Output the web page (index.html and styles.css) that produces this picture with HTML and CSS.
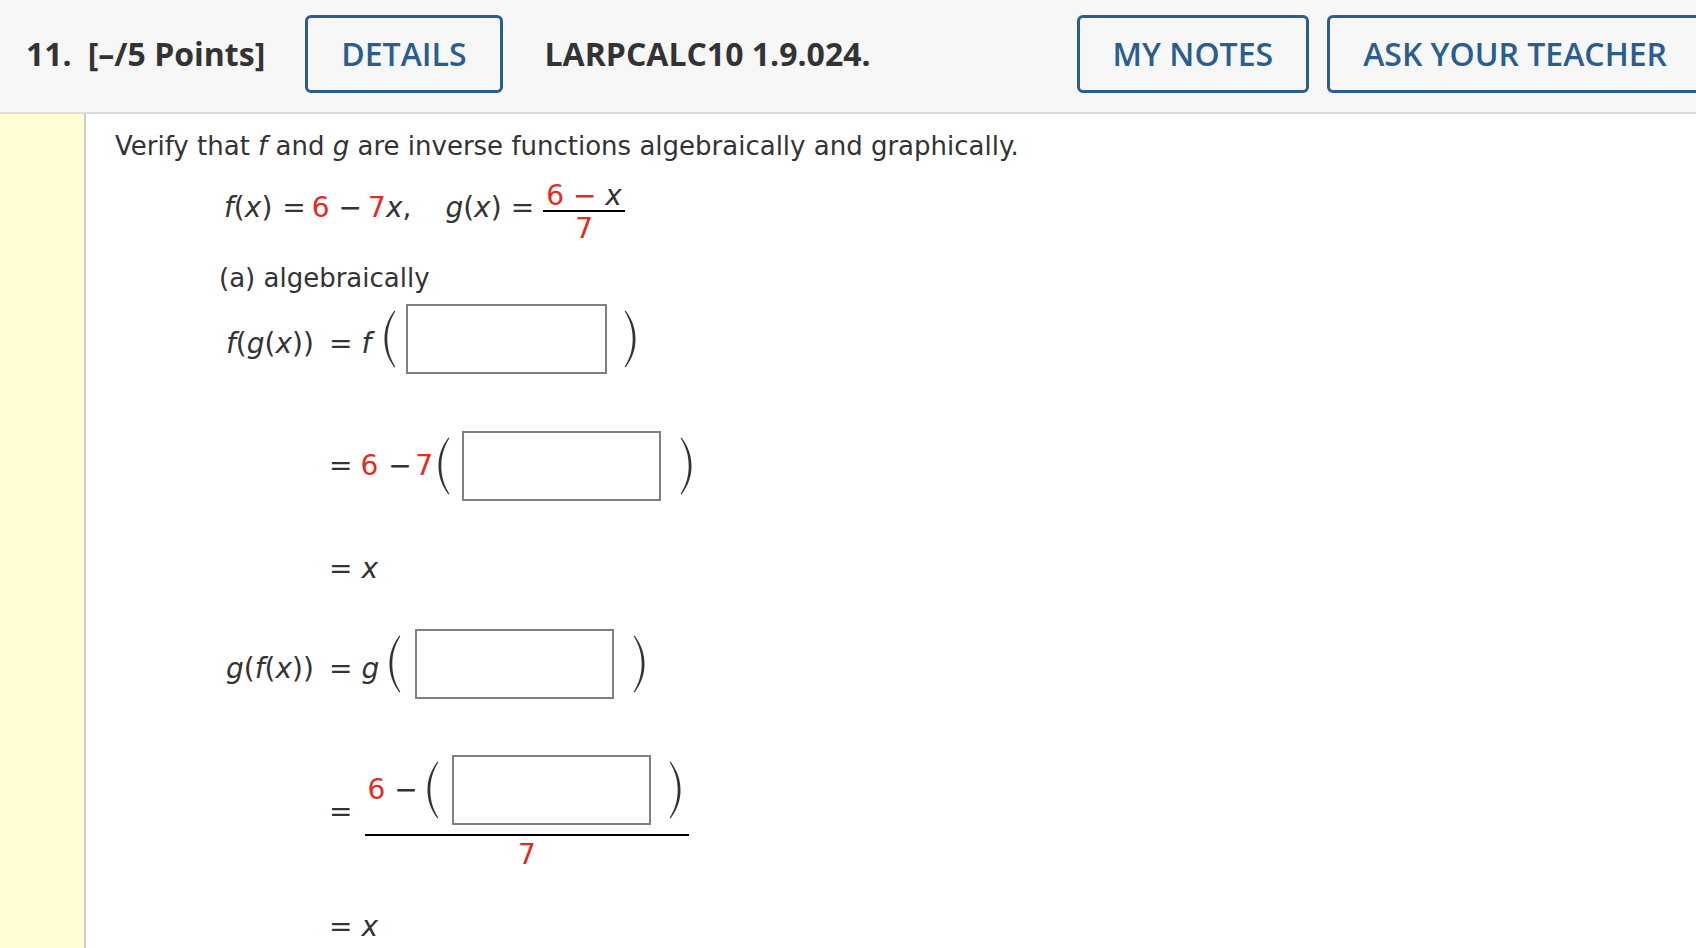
FILE: index.html
```html
<!DOCTYPE html>
<html lang="en">
<head>
<meta charset="utf-8">
<title>LARPCALC10 1.9.024</title>
<link rel="stylesheet" href="styles.css">
</head>
<body>
<header class="qhead">
  <span class="qnum">11.</span>
  <span class="qpts">[–/5 Points]</span>
  <button class="btn btn-details">DETAILS</button>
  <span class="qref">LARPCALC10 1.9.024.</span>
  <button class="btn btn-notes">MY NOTES</button>
  <button class="btn btn-ask">ASK YOUR TEACHER</button>
</header>
<div class="qbody">
  <div class="gutter"></div>
  <div class="main">
    <p class="prompt">Verify that <i>f</i> and <i>g</i> are inverse functions algebraically and graphically.</p>

    <div class="given m">
      <span class="t t-fx"><i>f</i>(<i>x</i>)</span>
      <span class="t t-eq1">=</span>
      <span class="t t-6 r">6</span>
      <span class="t t-minus">−</span>
      <span class="t t-7"><span class="r">7</span><i>x</i>,</span>
      <span class="t t-gx"><i>g</i>(<i>x</i>)</span>
      <span class="t t-eq2">=</span>
      <span class="frac frac-given">
        <span class="num">6 − <i>x</i></span>
        <span class="bar"></span>
        <span class="den r">7</span>
      </span>
    </div>

    <p class="part">(a) algebraically</p>

    <div class="row row1 m">
      <span class="lhs low"><i>f</i>(<i>g</i>(<i>x</i>))</span>
      <span class="eq low">=</span>
      <span class="fn low"><i>f</i></span>
      <svg class="paren pl" viewBox="0 0 13 58" aria-hidden="true"><path d="M11.5 0.5C4.5 10 1.5 19 1.5 29C1.5 39 4.5 48 11.5 57.5L12.3 56.8C6.5 47.5 4.3 38.5 4.3 29C4.3 19.5 6.5 10.5 12.3 1.2Z"/></svg>
      <span class="box"></span>
      <svg class="paren pr" viewBox="0 0 13 58" aria-hidden="true"><path d="M1.5 0.5C8.5 10 11.5 19 11.5 29C11.5 39 8.5 48 1.5 57.5L0.7 56.8C6.5 47.5 8.7 38.5 8.7 29C8.7 19.5 6.5 10.5 0.7 1.2Z"/></svg>
    </div>

    <div class="row row2 m">
      <span class="lhs"></span>
      <span class="eq">=</span>
      <span class="r c6">6</span>
      <span class="cminus">−</span>
      <span class="r c7">7</span>
      <svg class="paren pl" viewBox="0 0 13 58" aria-hidden="true"><path d="M11.5 0.5C4.5 10 1.5 19 1.5 29C1.5 39 4.5 48 11.5 57.5L12.3 56.8C6.5 47.5 4.3 38.5 4.3 29C4.3 19.5 6.5 10.5 12.3 1.2Z"/></svg>
      <span class="box"></span>
      <svg class="paren pr" viewBox="0 0 13 58" aria-hidden="true"><path d="M1.5 0.5C8.5 10 11.5 19 11.5 29C11.5 39 8.5 48 1.5 57.5L0.7 56.8C6.5 47.5 8.7 38.5 8.7 29C8.7 19.5 6.5 10.5 0.7 1.2Z"/></svg>
    </div>

    <div class="row row3 m">
      <span class="lhs"></span>
      <span class="eq">=</span>
      <span class="xv"><i>x</i></span>
    </div>

    <div class="row row4 m">
      <span class="lhs low"><i>g</i>(<i>f</i>(<i>x</i>))</span>
      <span class="eq low">=</span>
      <span class="fn low"><i>g</i></span>
      <svg class="paren pl" viewBox="0 0 13 58" aria-hidden="true"><path d="M11.5 0.5C4.5 10 1.5 19 1.5 29C1.5 39 4.5 48 11.5 57.5L12.3 56.8C6.5 47.5 4.3 38.5 4.3 29C4.3 19.5 6.5 10.5 12.3 1.2Z"/></svg>
      <span class="box"></span>
      <svg class="paren pr" viewBox="0 0 13 58" aria-hidden="true"><path d="M1.5 0.5C8.5 10 11.5 19 11.5 29C11.5 39 8.5 48 1.5 57.5L0.7 56.8C6.5 47.5 8.7 38.5 8.7 29C8.7 19.5 6.5 10.5 0.7 1.2Z"/></svg>
    </div>

    <div class="row row5 m">
      <span class="lhs"></span>
      <span class="eq">=</span>
      <span class="frac frac-big">
        <span class="bignum">
          <span class="r n6">6</span>
          <span class="nminus">−</span>
          <svg class="paren pl" viewBox="0 0 13 58" aria-hidden="true"><path d="M11.5 0.5C4.5 10 1.5 19 1.5 29C1.5 39 4.5 48 11.5 57.5L12.3 56.8C6.5 47.5 4.3 38.5 4.3 29C4.3 19.5 6.5 10.5 12.3 1.2Z"/></svg>
          <span class="box"></span>
          <svg class="paren pr" viewBox="0 0 13 58" aria-hidden="true"><path d="M1.5 0.5C8.5 10 11.5 19 11.5 29C11.5 39 8.5 48 1.5 57.5L0.7 56.8C6.5 47.5 8.7 38.5 8.7 29C8.7 19.5 6.5 10.5 0.7 1.2Z"/></svg>
        </span>
        <span class="bar"></span>
        <span class="den r">7</span>
      </span>
    </div>

    <div class="row row6 m">
      <span class="lhs"></span>
      <span class="eq">=</span>
      <span class="xv"><i>x</i></span>
    </div>
  </div>
</div>
</body>
</html>
```
FILE: styles.css
```css
html, body {
  margin: 0;
  padding: 0;
  height: 948px;
  overflow: hidden;
  background: #fff;
}

/* ---------- header ---------- */
.qhead {
  display: flex;
  align-items: flex-start;
  box-sizing: border-box;
  height: 114px;
  padding: 15px 0 0 26px;
  background: #f7f7f7;
  border-bottom: 2px solid #dcdcdc;
  white-space: nowrap;
  overflow: hidden;
  font-family: "Open Sans", "Liberation Sans", sans-serif;
  font-weight: 700;
  font-size: 32px;
  color: #333;
}
.qhead > * { flex-shrink: 0; }
.qnum, .qpts, .qref { line-height: 78px; }
.qnum { margin-right: 16px; }
.qpts { margin-right: 40px; }
.qref { margin-left: 42px; }

.btn {
  box-sizing: border-box;
  height: 78px;
  padding: 0 33px;
  margin: 0;
  border: 3px solid #2a5e91;
  border-radius: 6px;
  background: #f7f7f7;
  color: #2a5e91;
  font: inherit;
  font-weight: 600;
  line-height: 72px;
  cursor: pointer;
}
.btn-notes { margin-left: 206px; }
.btn-ask { margin-left: 18px; }

/* ---------- body ---------- */
.qbody {
  display: flex;
  height: 834px;
}
.gutter {
  width: 84px;
  flex-shrink: 0;
  background: #ffffd3;
  border-right: 2px solid #cccccc;
}
.main {
  flex: 1;
  padding: 17px 0 0 29px;
  font-family: "DejaVu Sans", Verdana, sans-serif;
  color: #333;
}
.prompt {
  margin: 0;
  font-size: 26px;
  line-height: 30px;
}
.part {
  margin: 20px 0 0 104px;
  font-size: 26px;
  line-height: 30px;
}

.m {
  font-size: 28px;
  line-height: 28px;
}
.m i { font-style: italic; }
.r { color: #e52a1e; }

/* ---------- given functions ---------- */
.given {
  display: flex;
  align-items: flex-start;
  margin: 17px 0 0 109px;
}
.given .t { margin-top: 16px; white-space: pre; }
.t-eq1 { margin-left: 10px; }
.t-6 { margin-left: 6px; }
.t-minus { margin-left: 9px; }
.t-7 { margin-left: 6px; }
.t-gx { margin-left: 34px; }
.t-eq2 { margin-left: 9px; }

.frac {
  display: flex;
  flex-direction: column;
  align-items: stretch;
}
.frac .bar {
  height: 2px;
  background: #000;
}
.frac-given { margin-left: 9px; margin-top: 4px; width: 82px; }
.frac-given .num {
  text-align: center;
  color: #e52a1e;
}
.frac-given .num i { color: #333; }
.frac-given .den { text-align: center; padding-top: 3px; }

/* ---------- answer rows ---------- */
.row {
  display: flex;
  align-items: center;
  margin-left: 111px;
}
.lhs { width: 103px; flex-shrink: 0; }
.eq { width: 23.5px; flex-shrink: 0; }
.low { margin-top: 9px; }

.box {
  box-sizing: border-box;
  width: 199px;
  height: 70px;
  flex-shrink: 0;
  border: 2px solid #808080;
  background: #fff;
}
.paren {
  width: 13px;
  height: 58px;
  flex-shrink: 0;
  fill: #333;
}

.row1 { margin-top: 11px; }
.row1 .fn { margin-left: 9px; }
.row1 .pl { margin-left: 12px; }
.row1 .box { margin-left: 10px; width: 201px; }
.row1 .pr { margin-left: 17px; }

.row2 { margin-top: 57px; }
.c6 { margin-left: 8px; }
.cminus { margin-left: 10px; }
.c7 { margin-left: 3.5px; }
.row2 .pl { margin-left: 3.5px; }
.row2 .box { margin-left: 12px; }
.row2 .pr { margin-left: 19px; }

.row3 { margin-top: 54px; }
.xv { margin-left: 9px; }

.row4 { margin-top: 46px; }
.row4 .fn { margin-left: 9px; }
.row4 .pl { margin-left: 9px; }
.row4 .box { margin-left: 13.5px; }
.row4 .pr { margin-left: 19px; }

.row5 { margin-top: 56px; }
.frac-big { margin-left: 12px; }
.bignum {
  display: flex;
  align-items: center;
  padding: 0 7px 0 3px;
}
.nminus { margin-left: 9px; }
.bignum .pl { margin-left: 8.5px; }
.bignum .box { margin-left: 12.5px; }
.bignum .pr { margin-left: 18.5px; }
.frac-big .bar { margin-top: 9px; }
.frac-big .den { margin-top: 5px; text-align: center; }

.row6 { margin-top: 44px; }
```
